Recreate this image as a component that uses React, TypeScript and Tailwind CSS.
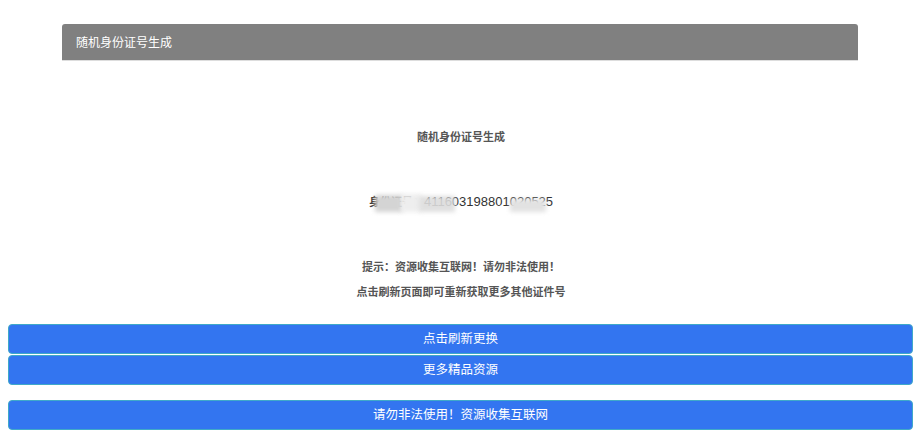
import React from "react";

const cjk = { fontFamily: '"Noto Sans CJK SC", "Liberation Sans", sans-serif' };

function ActionButton({ label, className = "" }: { label: string; className?: string }) {
  return (
    <button
      className={`flex h-[30px] w-full items-center justify-center rounded-[4px] border border-[#3fa9c9] bg-[#3375f0] text-[12.5px] text-white ${className}`}
      style={cjk}
    >
      {label}
    </button>
  );
}

export default function App() {
  return (
    <div className="min-h-[438px] w-full overflow-hidden bg-white" style={cjk}>
      <div className="mx-auto mt-[24px] w-[796px] -translate-x-[1px]">
        <div className="flex h-[37px] items-center rounded-t-[3px] border-b border-[#dddddd] bg-[#808080] pl-[14px] text-[12px] text-white">
          随机身份证号生成
        </div>
      </div>

      <div className="mt-[67px] text-center text-[11px] font-bold text-[#555555]">随机身份证号生成</div>

      <div className="relative mt-[47px] flex h-[20px] items-center justify-center text-[#333333]">
        <span className="text-[11px] font-bold" style={cjk}>身份证号：</span>
        <span className="text-[13px]" style={{ fontFamily: '"Liberation Sans", Arial, sans-serif' }}>
          411603198801020525
        </span>
        {/* masking smudges over the number */}
        <div className="absolute left-[375px] top-[3px] h-[17px] w-[28px] bg-[#d4d4d4] blur-[2px]" />
        <div className="absolute left-[401px] top-[2px] h-[18px] w-[20px] bg-[#eeeeee] blur-[2px]" />
        <div className="absolute left-[419px] top-[4px] h-[16px] w-[36px] bg-[#dcdcdc]/90 blur-[2px]" />
        <div className="absolute left-[510px] top-[7px] h-[13px] w-[36px] bg-[#e2e2e2] blur-[2px]" />
      </div>

      <div className="mt-[46px] flex flex-col items-center gap-[8px] text-[11px] font-bold leading-[17px] text-[#555555]">
        <div>提示：资源收集互联网！请勿非法使用！</div>
        <div>点击刷新页面即可重新获取更多其他证件号</div>
      </div>

      <div className="ml-[8px] mt-[24px] w-[905px]">
        <ActionButton label="点击刷新更换" />
        <ActionButton label="更多精品资源" className="mt-[1px]" />
        <ActionButton label="请勿非法使用！资源收集互联网" className="mt-[15px]" />
      </div>
    </div>
  );
}
